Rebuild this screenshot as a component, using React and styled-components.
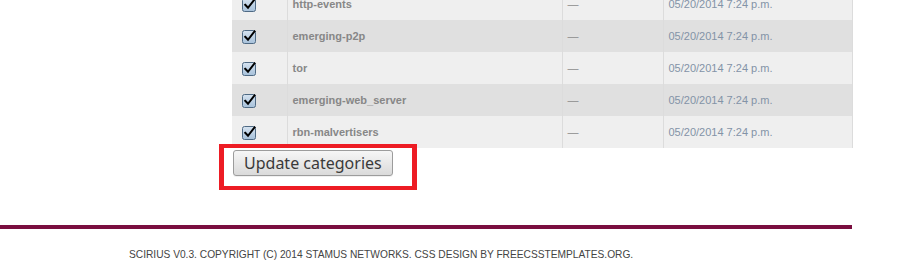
import React from "react";
import styled, { createGlobalStyle } from "styled-components";

const Global = createGlobalStyle`
  html, body { margin: 0; padding: 0; background: #ffffff; }
  body { font-family: "Liberation Sans", Arial, sans-serif; overflow: hidden; }
`;

const Page = styled.div`
  width: 852px;
`;

const Main = styled.main`
  padding-left: 232px;
  display: flex;
  flex-direction: column;
  align-items: flex-start;
`;

const Table = styled.table`
  width: 620px;
  margin-top: -12px;
  border-collapse: collapse;
  table-layout: fixed;
`;

const Row = styled.tr`
  background: ${(p) => (p.$alt ? "#e0e0e0" : "#efefef")};
  height: 32px;
`;

const Cell = styled.td`
  padding: 0 5px;
  border-right: 1px solid #dcdcdc;
  font-size: 11px;
  vertical-align: middle;
  white-space: nowrap;
`;

const CheckCell = styled(Cell)`
  padding: 0 0 0 10px;
`;

const NameCell = styled(Cell)`
  font-weight: bold;
  color: #878787;
`;

const DashCell = styled(Cell)`
  color: #8a8a8a;
`;

const DateCell = styled(Cell)`
  color: #8393a7;
`;

const CheckBox = styled.svg`
  display: block;
  width: 15px;
  height: 15px;
`;

const ButtonWrap = styled.div`
  position: relative;
  margin-top: 2px;
  margin-left: 1px;
`;

const Button = styled.button`
  height: 26px;
  padding: 0 10px;
  border: 1px solid #9c9c9c;
  border-radius: 3px;
  background: linear-gradient(#f6f6f6, #dadada);
  color: #3a3a3a;
  font-family: "Noto Sans", "Open Sans", sans-serif;
  font-size: 16px;
  line-height: 22px;
  box-shadow: 0 1px 0 rgba(0, 0, 0, 0.06);
`;

const Highlight = styled.div`
  position: absolute;
  left: -14px;
  top: -6px;
  width: 188px;
  height: 38px;
  border: 5px solid #ed1c24;
  border-top-width: 4px;
  border-bottom-width: 4px;
  pointer-events: none;
`;

const Footer = styled.footer`
  margin-top: 49px;
  border-top: 4px solid #7a0e3f;
`;

const FooterText = styled.p`
  margin: 0;
  padding: 19px 0 0 129px;
  font-size: 10.2px;
  line-height: 13px;
  color: #444444;
  text-transform: uppercase;
`;

const rows = [
  "http-events",
  "emerging-p2p",
  "tor",
  "emerging-web_server",
  "rbn-malvertisers",
];

function Check() {
  return (
    <CheckBox viewBox="0 0 15 15">
      <defs>
        <linearGradient id="cb" x1="0" y1="0" x2="0" y2="1">
          <stop offset="0" stopColor="#d6e3f0" />
          <stop offset="1" stopColor="#a7c1da" />
        </linearGradient>
      </defs>
      <rect x="0.5" y="1.5" width="13" height="13" rx="2" fill="url(#cb)" stroke="#4f6a84" />
      <path d="M3.2 7.8 L6 10.8 L12.5 2.5" fill="none" stroke="#000" strokeWidth="2" strokeLinecap="square" />
    </CheckBox>
  );
}

export default function App() {
  return (
    <Page>
      <Global />
      <Main>
        <Table>
          <colgroup>
            <col style={{ width: 55 }} />
            <col style={{ width: 275 }} />
            <col style={{ width: 101 }} />
            <col style={{ width: 189 }} />
          </colgroup>
          <tbody>
            {rows.map((name, i) => (
              <Row key={name} $alt={i % 2 === 1}>
                <CheckCell>
                  <Check />
                </CheckCell>
                <NameCell>{name}</NameCell>
                <DashCell>—</DashCell>
                <DateCell>05/20/2014 7:24 p.m.</DateCell>
              </Row>
            ))}
          </tbody>
        </Table>
        <ButtonWrap>
          <Button>Update categories</Button>
          <Highlight />
        </ButtonWrap>
      </Main>
      <Footer>
        <FooterText>
          Scirius v0.3. Copyright (C) 2014 Stamus Networks. CSS design by freecsstemplates.org.
        </FooterText>
      </Footer>
    </Page>
  );
}
